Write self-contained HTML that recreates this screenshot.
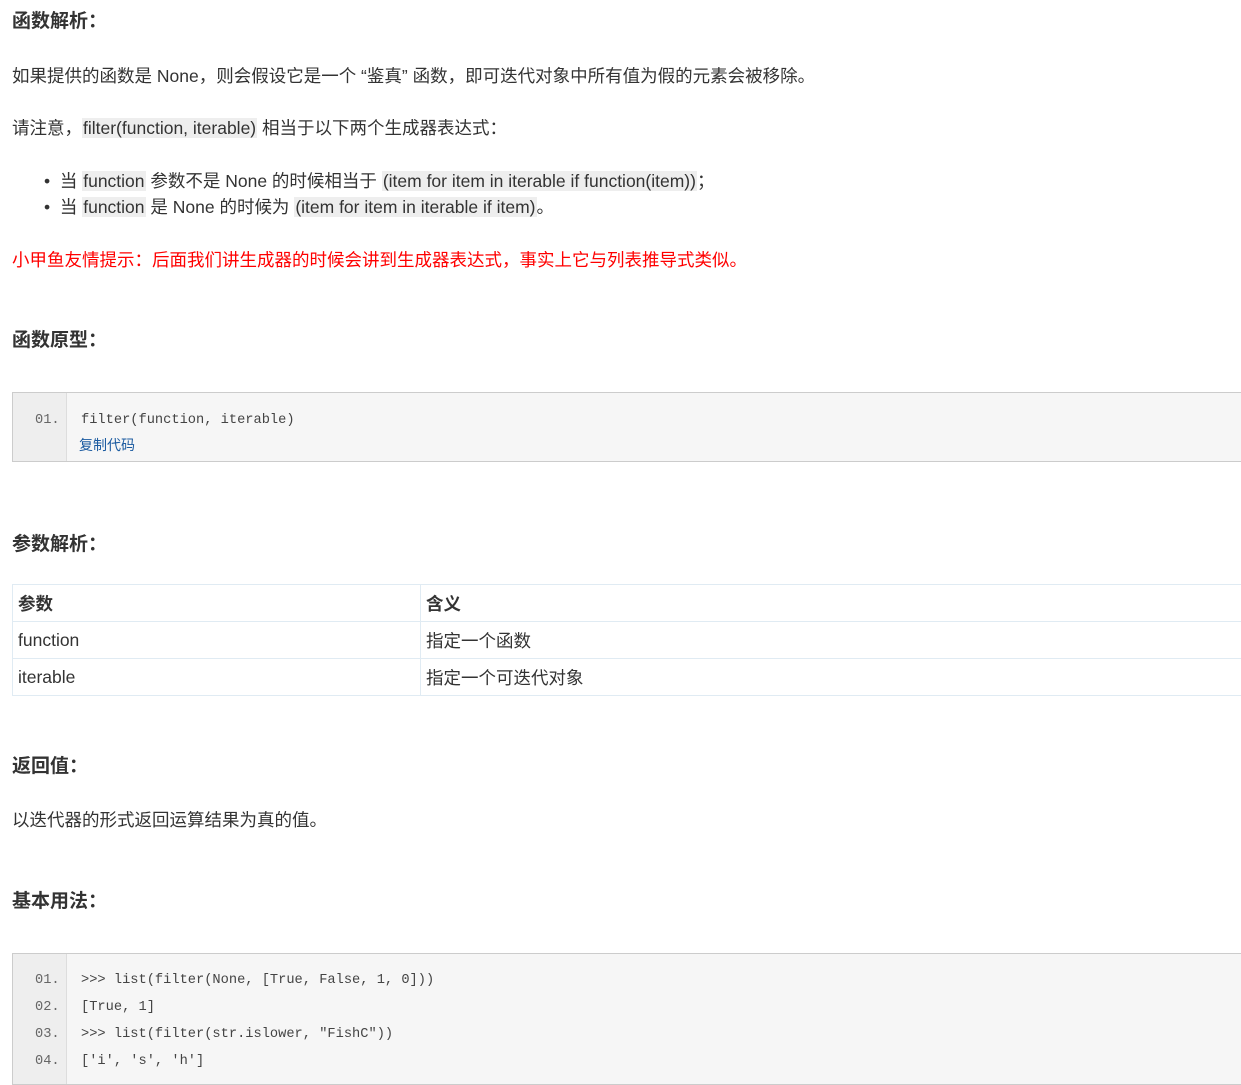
<!DOCTYPE html>
<html><head><meta charset="utf-8"><style>
body{margin:0;width:1241px;height:1068px;overflow:hidden;background:#fff;font-family:"Liberation Sans","Noto Sans CJK SC",sans-serif;color:#333;font-size:17.5px;position:relative}
.a{position:absolute;white-space:nowrap;line-height:24px}
h{font-weight:bold;font-size:19px;color:#333}
code{background:#eee;font-family:inherit;padding:0 1px}
.red{color:#f00}
.cb{position:absolute;left:12px;right:-2px;border:1px solid #ccc;background:#f6f6f6}
.gut{position:absolute;left:0;top:0;bottom:0;width:53px;background:#eee;border-right:1px solid #ddd}
.ln{position:absolute;left:22px;font-family:"Liberation Mono",monospace;font-size:13.7px;color:#666;line-height:27px}
.cd{position:absolute;left:68px;font-family:"Liberation Mono",monospace;font-size:13.7px;color:#444;line-height:27px;white-space:pre}
table{position:absolute;left:12px;top:584px;width:1232px;border-collapse:collapse}
td{border:1px solid #e0ebf3;height:36px;padding:0 5px;font-size:17.5px;color:#333}
</style></head><body>
<div class="a" style="left:12px;top:9px"><h>函数解析：</h></div>
<div class="a" style="left:12px;top:64px">如果提供的函数是 None，则会假设它是一个 “鉴真” 函数，即可迭代对象中所有值为假的元素会被移除。</div>
<div class="a" style="left:12px;top:116px">请注意，<code>filter(function, iterable)</code> 相当于以下两个生成器表达式：</div>
<div class="a" style="left:44px;top:169px">•&nbsp;&nbsp;当 <code>function</code> 参数不是 None 的时候相当于 <code>(item for item in iterable if function(item))</code>；</div>
<div class="a" style="left:44px;top:195px">•&nbsp;&nbsp;当 <code>function</code> 是 None 的时候为 <code>(item for item in iterable if item)</code>。</div>
<div class="a red" style="left:12px;top:248px">小甲鱼友情提示：后面我们讲生成器的时候会讲到生成器表达式，事实上它与列表推导式类似。</div>
<div class="a" style="left:12px;top:328px"><h>函数原型：</h></div>
<div class="cb" style="top:392px;height:68px"><div class="gut"></div>
<div class="ln" style="top:14px">01.</div><div class="cd" style="top:14px">filter(function, iterable)</div>
<div class="a" style="left:66px;top:40px;font-size:14px;color:#1a5aa0">复制代码</div></div>
<div class="a" style="left:12px;top:532px"><h>参数解析：</h></div>
<table><tr><td style="width:397px"><b>参数</b></td><td><b>含义</b></td></tr>
<tr><td>function</td><td>指定一个函数</td></tr>
<tr><td>iterable</td><td>指定一个可迭代对象</td></tr></table>
<div class="a" style="left:12px;top:754px"><h>返回值：</h></div>
<div class="a" style="left:12px;top:808px">以迭代器的形式返回运算结果为真的值。</div>
<div class="a" style="left:12px;top:889px"><h>基本用法：</h></div>
<div class="cb" style="top:953px;height:130px"><div class="gut"></div>
<div class="ln" style="top:13px">01.</div><div class="cd" style="top:13px">&gt;&gt;&gt; list(filter(None, [True, False, 1, 0]))</div>
<div class="ln" style="top:40px">02.</div><div class="cd" style="top:40px">[True, 1]</div>
<div class="ln" style="top:67px">03.</div><div class="cd" style="top:67px">&gt;&gt;&gt; list(filter(str.islower, "FishC"))</div>
<div class="ln" style="top:94px">04.</div><div class="cd" style="top:94px">['i', 's', 'h']</div></div>
</body></html>
